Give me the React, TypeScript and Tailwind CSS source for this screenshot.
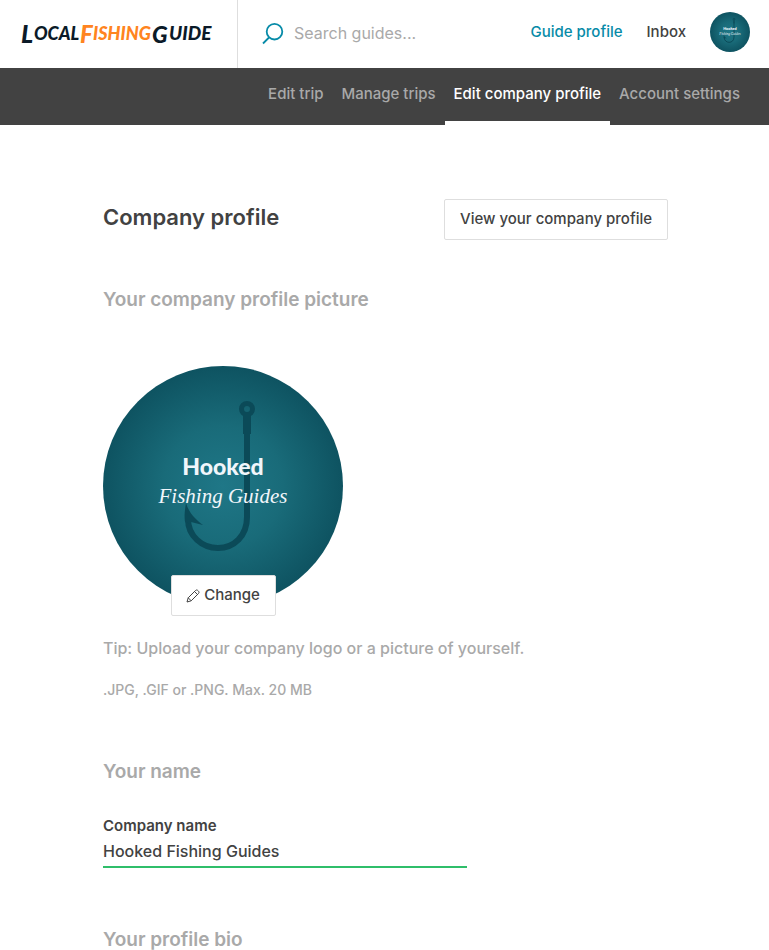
import { useId } from "react";

const tabs = [
  { label: "Edit trip", active: false },
  { label: "Manage trips", active: false },
  { label: "Edit company profile", active: true },
  { label: "Account settings", active: false },
];

function Logo() {
  return (
    <svg viewBox="0 0 196 40" className="h-10 w-[196px]" role="img" aria-label="Local Fishing Guide">
      <g className="font-['Lato',sans-serif] font-black italic" fill="#0b1a28">
        <text x="1" y="29" fontSize="25">L</text>
        <text x="14" y="26" fontSize="18">OCAL</text>
        <text x="60" y="29" fontSize="24" fill="#ff8420">F</text>
        <text x="73" y="26" fontSize="18" fill="#ff8420">ISHING</text>
        <text x="132" y="29" fontSize="23">G</text>
        <text x="149" y="26" fontSize="19">UIDE</text>
      </g>
    </svg>
  );
}

function CompanyPicture({ className }: { className: string }) {
  const id = useId();
  return (
    <svg viewBox="0 0 240 240" className={className} role="img" aria-label="Hooked Fishing Guides">
      <defs>
        <radialGradient id={id}>
          <stop offset="0" stopColor="#1f7787" />
          <stop offset="0.5" stopColor="#196b79" />
          <stop offset="1" stopColor="#0e5361" />
        </radialGradient>
      </defs>
      <circle cx="120" cy="120" r="120" fill={`url(#${id})`} />
      <g fill="none" stroke="#0b4a58">
        <circle cx="144" cy="43" r="5.5" strokeWidth="5" />
        <path d="M144 50v18" strokeWidth="8" />
        <path d="M144 64v87c0 19-13 31-29 31s-30-12-30-29" strokeWidth="6" />
        <path d="M82 156c-1-7 0-13 1-19 3 10 9 16 17 22l-12-3v2z" fill="#0b4a58" stroke="none" />
      </g>
      <text x="120" y="109" textAnchor="middle" fontSize="23" fill="#f1f6fb" className="font-['Lato',sans-serif] font-black">
        Hooked
      </text>
      <text x="120" y="137" textAnchor="middle" fontSize="21" fill="#f1f6fb" className="font-['Liberation_Serif',serif] italic">
        Fishing Guides
      </text>
    </svg>
  );
}

function SearchIcon() {
  return (
    <svg viewBox="0 0 22 22" className="size-[22px] shrink-0" fill="none" stroke="#078ba8" strokeWidth="1.8" aria-hidden="true">
      <circle cx="12.5" cy="8.7" r="7.8" />
      <path d="M7 14.5 1 20.500" />
    </svg>
  );
}

function PencilIcon() {
  return (
    <svg viewBox="0 0 14 14" className="size-3.5" fill="none" stroke="#424242" strokeWidth="1" strokeLinejoin="round" aria-hidden="true">
      <path d="M1 13l1.200-4.200 7.300-7.300c.7-.7 1.600-.7 2.300 0l.7.7c.7.7.7 1.600 0 2.300L5.200 11.800z" />
      <path d="M2.200 8.800l3 3M8.500 2.500l3 3" />
    </svg>
  );
}

function SectionTitle({ children }: { children: string }) {
  return <h2 className="text-[19px] leading-7 font-semibold text-[#a9a9a9]">{children}</h2>;
}

export default function App() {
  return (
    <div className="min-h-screen bg-white font-['Inter',sans-serif] text-[15px] font-medium text-[#424242]">
      <header className="flex h-[68px] items-center pr-[19px]">
        <a href="#" className="flex h-full items-center border-r border-[#dedede] pr-[21px] pl-5">
          <Logo />
        </a>
        <label className="flex min-w-0 flex-1 items-center gap-2.5 pl-6">
          <SearchIcon />
          <input
            type="search"
            aria-label="Search guides"
            placeholder="Search guides..."
            className="w-full min-w-0 pb-0.5 text-base font-normal outline-none placeholder:text-[#a9a9a9]"
          />
        </label>
        <nav className="flex shrink-0 items-center gap-6 pb-1">
          <a href="#" className="text-[#078ba8]">Guide profile</a>
          <a href="#">Inbox</a>
          <a href="#">
            <CompanyPicture className="size-10" />
          </a>
        </nav>
      </header>

      <nav className="flex h-[57px] justify-end bg-[#424242] pr-5">
        {tabs.map((tab) => (
          <a
            key={tab.label}
            href="#"
            className={`flex items-center border-b-4 px-[9px] ${
              tab.active ? "border-white text-white" : "border-transparent text-[#a9a9a9]"
            }`}
          >
            {tab.label}
          </a>
        ))}
      </nav>

      <main className="pt-[74px] pr-[101px] pb-10 pl-[103px]">
        <div className="flex items-start justify-between">
          <h1 className="text-[22px] leading-9 font-semibold">Company profile</h1>
          <button type="button" className="h-[41px] rounded-xs border border-[#dedede] px-[15px]">
            View your company profile
          </button>
        </div>

        <section className="pt-[46px]">
          <SectionTitle>Your company profile picture</SectionTitle>
          <div className="relative mt-[52px] w-60">
            <CompanyPicture className="size-60" />
            <button
              type="button"
              className="absolute inset-x-0 -bottom-2.5 mx-auto flex h-[41px] w-[105px] items-center justify-center gap-1 rounded-xs border border-[#dedede] bg-white"
            >
              <PencilIcon />
              Change
            </button>
          </div>
          <p className="mt-[30px] text-base leading-6 text-[#a9a9a9]">
            Tip: Upload your company logo or a picture of yourself.
          </p>
          <p className="mt-5 text-sm leading-5 text-[#a9a9a9]">.JPG, .GIF or .PNG. Max. 20 MB</p>
        </section>

        <section className="pt-[58px]">
          <SectionTitle>Your name</SectionTitle>
          <label htmlFor="company-name" className="mt-[30px] block leading-5 font-semibold">
            Company name
          </label>
          <input
            id="company-name"
            defaultValue="Hooked Fishing Guides"
            className="block h-8 w-full max-w-[364px] border-b-2 border-[#2fbe6a] text-base outline-none"
          />
        </section>

        <section className="pt-[58px]">
          <SectionTitle>Your profile bio</SectionTitle>
        </section>
      </main>
    </div>
  );
}
